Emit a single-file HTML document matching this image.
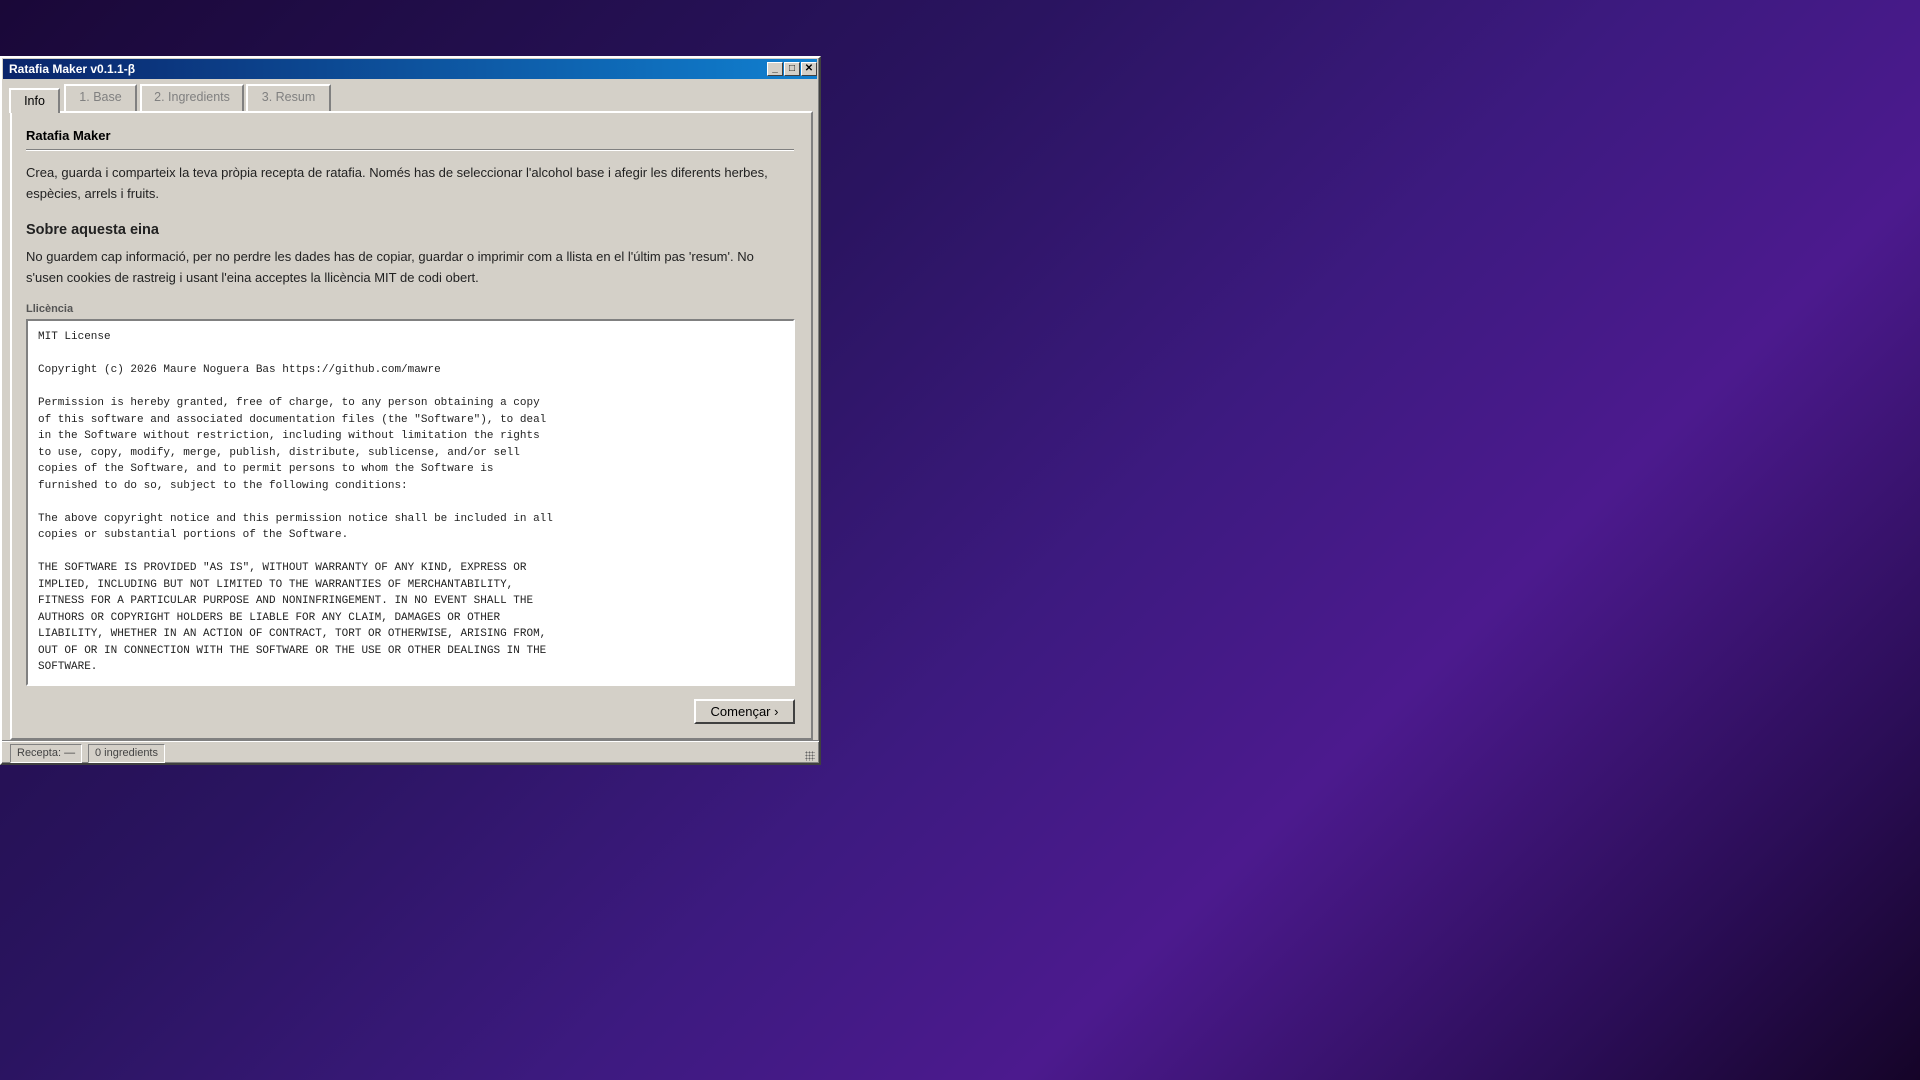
<!DOCTYPE html>
<html><head><meta charset="utf-8"><style>
*{box-sizing:border-box;margin:0;padding:0}
html,body{width:1920px;height:1080px;overflow:hidden}
body{background:linear-gradient(135deg,#1a0838 0%,#2a1460 35%,#3d1a80 55%,#4c1a8e 70%,#2a0d55 88%,#150428 100%);font-family:"Liberation Sans",sans-serif;position:relative}
.win{position:absolute;left:0;top:56px;width:821px;height:709px;background:#d4d0c8;border:2px solid;border-color:#fff #404040 #404040 #fff;box-shadow:inset -1px -1px #808080}
.title{position:absolute;left:1px;top:1px;right:2px;height:20px;background:linear-gradient(90deg,#0a246a,#1080d0);color:#fff;font-weight:bold;font-size:12px;line-height:20px;padding-left:6px}
.tb{position:absolute;top:3px;width:16px;height:14px;background:#d4d0c8;border:1px solid;border-color:#fff #404040 #404040 #fff;color:#000;font-size:10px;line-height:11px;text-align:center}
.tab{position:absolute;top:26px;height:27px;border:2px solid;border-bottom:none;border-color:#fff #808080 #808080 #fff;color:#808080;font-size:12.5px;text-align:center;line-height:22px}
.panel{position:absolute;left:8px;top:53px;width:803px;height:629px;border:2px solid;border-color:#fff #808080 #808080 #fff}
.h1{position:absolute;left:24px;top:70px;font-size:13px;font-weight:bold;color:#000}
.hr{position:absolute;left:24px;top:91px;width:768px;border-top:1px solid #808080;border-bottom:1px solid #fff}
p{position:absolute;left:24px;width:755px;font-size:13px;line-height:21px;color:#222}
.h2{position:absolute;left:24px;top:164px;font-size:14.5px;font-weight:bold;color:#222}
.lab{position:absolute;left:24px;top:245px;font-size:11px;font-weight:bold;color:#555}
.ta{position:absolute;left:24px;top:261px;width:769px;height:367px;background:#fff;border:2px solid;border-color:#808080 #fff #fff #808080;padding:8px 10px;font-family:"Liberation Mono",monospace;font-size:11px;line-height:16.5px;color:#222;white-space:pre;overflow:hidden}
.btn{position:absolute;left:692px;top:641px;width:101px;height:25px;border:2px solid;border-color:#fff #404040 #404040 #fff;font-size:13px;line-height:21px;text-align:center;color:#000}
.sb{position:absolute;top:686px;height:19px;border:1px solid;border-color:#808080 #fff #fff #808080;font-size:11px;color:#444;line-height:17px;padding-left:6px}
</style></head><body>
<div class="win">
<div class="title">Ratafia Maker v0.1.1-β
<div class="tb" style="right:34px">_</div><div class="tb" style="right:17px">□</div><div class="tb" style="right:0;font-weight:bold">✕</div></div>
<div class="panel"></div>
<div class="tab" style="left:7px;top:30px;width:51px;height:25px;color:#000;background:#d4d0c8;z-index:2">Info</div>
<div class="tab" style="left:62px;width:73px">1. Base</div>
<div class="tab" style="left:138px;width:104px">2. Ingredients</div>
<div class="tab" style="left:244px;width:85px">3. Resum</div>
<div class="h1">Ratafia Maker</div>
<div class="hr"></div>
<p style="top:104px">Crea, guarda i comparteix la teva pròpia recepta de ratafia. Només has de seleccionar l'alcohol base i afegir les diferents herbes, espècies, arrels i fruits.</p>
<div class="h2">Sobre aquesta eina</div>
<p style="top:188px">No guardem cap informació, per no perdre les dades has de copiar, guardar o imprimir com a llista en el l'últim pas 'resum'. No s'usen cookies de rastreig i usant l'eina acceptes la llicència MIT de codi obert.</p>
<div class="lab">Llicència</div>
<div class="ta">MIT License

Copyright (c) 2026 Maure Noguera Bas https://github.com/mawre

Permission is hereby granted, free of charge, to any person obtaining a copy
of this software and associated documentation files (the "Software"), to deal
in the Software without restriction, including without limitation the rights
to use, copy, modify, merge, publish, distribute, sublicense, and/or sell
copies of the Software, and to permit persons to whom the Software is
furnished to do so, subject to the following conditions:

The above copyright notice and this permission notice shall be included in all
copies or substantial portions of the Software.

THE SOFTWARE IS PROVIDED "AS IS", WITHOUT WARRANTY OF ANY KIND, EXPRESS OR
IMPLIED, INCLUDING BUT NOT LIMITED TO THE WARRANTIES OF MERCHANTABILITY,
FITNESS FOR A PARTICULAR PURPOSE AND NONINFRINGEMENT. IN NO EVENT SHALL THE
AUTHORS OR COPYRIGHT HOLDERS BE LIABLE FOR ANY CLAIM, DAMAGES OR OTHER
LIABILITY, WHETHER IN AN ACTION OF CONTRACT, TORT OR OTHERWISE, ARISING FROM,
OUT OF OR IN CONNECTION WITH THE SOFTWARE OR THE USE OR OTHER DEALINGS IN THE
SOFTWARE.</div>
<div class="btn">Començar ›</div>
<div style="position:absolute;left:0;right:0;top:682px;border-top:1px solid #808080;border-bottom:1px solid #fff"></div>
<div class="sb" style="left:8px;width:72px">Recepta: —</div>
<div class="sb" style="left:86px;width:77px">0 ingredients</div>
<div style="position:absolute;right:4px;top:693px;width:10px;height:10px;background:radial-gradient(circle,#666 40%,transparent 45%) 0 0/3px 3px"></div>
</div>
</body></html>
